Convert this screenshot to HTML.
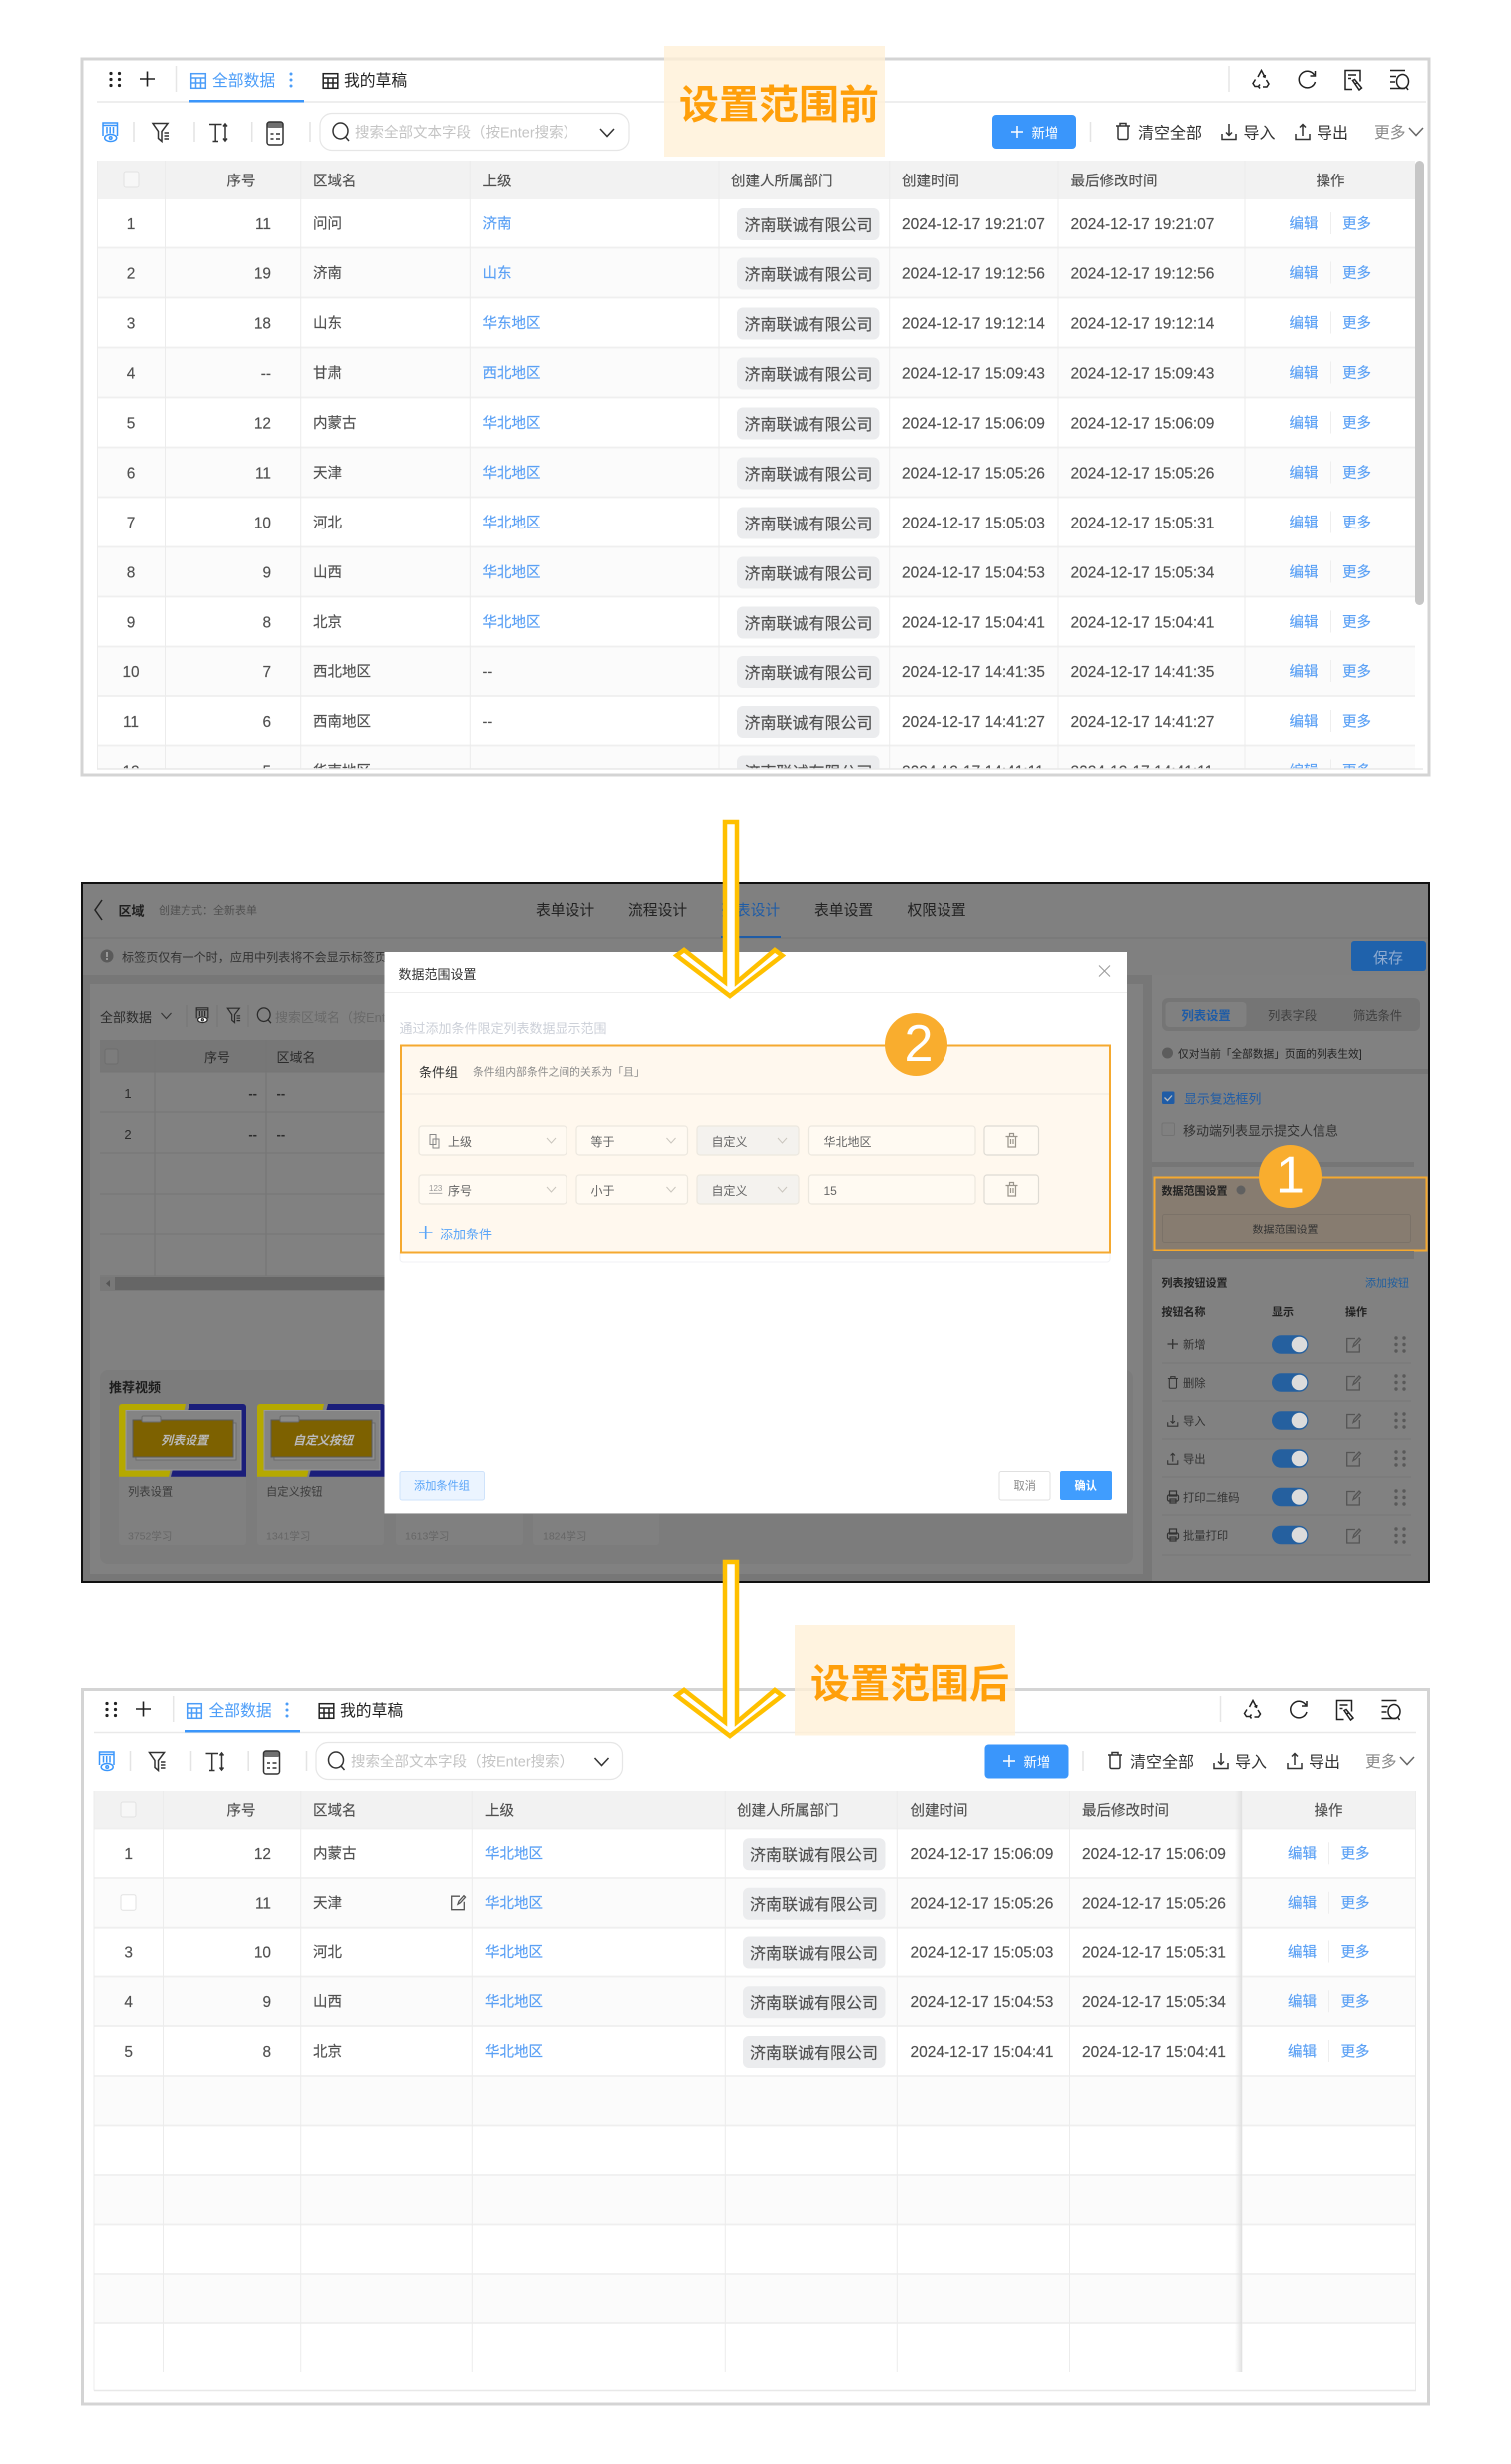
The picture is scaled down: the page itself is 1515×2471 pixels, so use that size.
<!DOCTYPE html>
<html lang="zh"><head><meta charset="utf-8"><title>设置范围</title>
<style>
html,body{margin:0;padding:0;background:#fff}
svg{display:block}
text{font-family:"Liberation Sans","Noto Sans CJK SC",sans-serif;dominant-baseline:central;white-space:pre;transform:translateY(1.4px)}
.b{font-size:14.5px;fill:#505050;stroke:#505050;stroke-width:.15px}.m{text-anchor:middle}.e{text-anchor:end}
.b.m,.b.e{font-size:15.4px}
.l{font-size:14.5px;fill:#5aa0f5;stroke:#5aa0f5;stroke-width:.15px}.c{font-size:16px;fill:#505050;stroke:#505050;stroke-width:.15px}.d{font-size:15.5px;fill:#505050;stroke:#505050;stroke-width:.15px}
.h{font-size:14.5px;fill:#505050;stroke:#505050;stroke-width:.15px}
.k{font-size:16px;fill:#333}
.w{font-size:13px;fill:#2b2b2b}
.n{font-size:11.5px;fill:#333}
.ic{fill:none;stroke:currentColor;stroke-width:1.5}
</style></head><body>
<svg xmlns="http://www.w3.org/2000/svg" width="1515" height="2471" viewBox="0 0 1515 2471">
<defs>
<g id="ig" class="ic" stroke-width="1.4"><rect x=".7" y=".7" width="14.6" height="14.6"/><path d="M.7 5h14.6M.7 10h14.6M5.5 5v10.3M10.5 5v10.3"/></g>
<g id="idots" fill="currentColor" stroke="none"><circle cx="1.5" cy="1.5" r="1.6"/><circle cx="10" cy="1.5" r="1.6"/><circle cx="1.5" cy="7.5" r="1.6"/><circle cx="10" cy="7.5" r="1.6"/><circle cx="1.5" cy="13.5" r="1.6"/><circle cx="10" cy="13.5" r="1.6"/></g>
<g id="ieye" class="ic" stroke-width="1.4"><path d="M1.500 14V1h14.500v13M5.500 5v6.500M8.700 5v6.500M12 5v6.500M1.500 3.500h14.500"/><ellipse cx="9.200" cy="16" rx="6" ry="3.500" fill="#fff"/><circle cx="9.200" cy="16" r="1.300"/></g>
<g id="ifil" class="ic" stroke-width="1.500"><path d="M1 1.500h15l-6 8v10l-3.500-3V9.500zM12.500 11h4.500M12.500 14h4.500M12.500 17h4.500"/></g>
<g id="itt" class="ic" stroke-width="1.700"><path d="M1 2.500h12.500M7.200 2.500V19M4.500 19.500h5.500M17 2v17M15 4.500l2-2.500 2 2.500M15 16.500l2 2.500 2-2.500"/></g>
<g id="ical"><rect x="1" y="1" width="16" height="23" rx="2.500" fill="none" stroke="currentColor" stroke-width="1.500"/><rect x="1" y="1" width="16" height="6" rx="2" fill="currentColor" fill-opacity=".7"/><path d="M4.500 13h3M10 13h4M4.500 18h3M10 18h4" stroke="currentColor" stroke-width="1.500"/></g>
<g id="isr" class="ic" stroke-width="1.700"><ellipse cx="8.500" cy="9" rx="7.500" ry="8"/><path d="M13.500 15l3.500 4"/></g>
<path id="ich" class="ic" d="M0 0l7 7.500 7-7.500"/>
<g id="itr" class="ic" stroke-width="1.800"><path d="M.5 3.500h14M4.500 3.500V1h6v2.500M2.500 3.500v12a1.500 1.500 0 0 0 1.500 1.500h7a1.500 1.500 0 0 0 1.500-1.500v-12"/></g>
<g id="iin" class="ic" stroke-width="1.700"><path d="M8 0v11M5 8.500l3 3 3-3M1 10v5.500h14V10"/></g>
<g id="iou" class="ic" stroke-width="1.700"><path d="M8 12V1M5 3.500l3-3 3 3M1 10v5.500h14V10"/></g>
<g id="irc" class="ic" stroke-width="1.800"><path d="M6 8l3.500-6.500L13 8M11 7.300l2 .9.400-2.200M3.500 10.500l-2.500 4 2 3h4M8 15.500l-1.500 2 1.500 2M14.500 11l2.500 4-2 3h-4"/></g>
<g id="irf" class="ic" stroke-width="1.800"><path d="M16.500 5A8.300 8.300 0 1 0 17.500 12M17.500 1v5h-5"/></g>
<g id="idc" class="ic" stroke-width="1.800"><path d="M8 20H1V1h15v11M4 5.500h8M4 9h3"/><path d="M8.500 11l2-1 7 8.500-2.500 2z"/><path d="M11 14.500l2.500-1.500"/></g>
<g id="isl" class="ic" stroke-width="1.600"><path d="M1 1h15M1 7h6M1 12.500h5M1 19h15"/><ellipse cx="13.500" cy="12" rx="6" ry="7"/><path d="M17 17.500l2 3"/></g>
<g id="isep"><rect x="0" y="-11" width="1" height="22" fill="#eee"/></g>
<rect id="chip" x="0" y="-15" width="142.500" height="32" rx="6" fill="#ebecee"/>
<path id="sc" fill="none" stroke="#c9c5bd" stroke-width="1" d="M0 0l4.500 5 4.500-5"/>
<g id="it2" fill="none" stroke="#9a958c" stroke-width="1.200"><path d="M.5 3.500h12M3 3.500V14h7.500V3.500M4.500 3.500V.5h4v3M5.500 6v5M8 6v5"/></g>
<g id="ied" fill="none" stroke="#555" stroke-width="1.300"><path d="M9 1.500H.7v13.500h12.600V7M7 9.500l1-3 5-5.500 1.500 1.500-5 5.500z"/></g>
<g id="idg" fill="#595959"><circle cx="2" cy="2" r="1.700"/><circle cx="10" cy="2" r="1.700"/><circle cx="2" cy="8.500" r="1.700"/><circle cx="10" cy="8.500" r="1.700"/><circle cx="2" cy="15" r="1.700"/><circle cx="10" cy="15" r="1.700"/></g>
<g id="itg"><rect x="0" y="-9.300" width="36.500" height="18.600" rx="9.300" fill="#25609f"/><circle cx="27.500" cy="0" r="7.800" fill="#dcdcdc"/></g>
<g id="thumb"><path d="M0 3a3 3 0 0 1 3-3h64L50 72.700H0z" fill="#b5a900"/><path d="M71 0h54a3 3 0 0 1 3 3v69.700H52z" fill="#1b1e7a"/><rect x="7" y="6.500" width="116" height="59.500" fill="#848484" stroke="#9a9a9a"/><rect x="17" y="19" width="101" height="37" fill="#8e8e8e" stroke="#6d6d6d"/><rect x="14" y="16" width="101" height="37" fill="#7d6100" stroke="#5a5a5a"/><rect x="23" y="12" width="19" height="6" rx="1.500" fill="#8c8c8c" stroke="#6a6a6a"/></g>
<clipPath id="cl1"><rect x="97" y="160" width="1333" height="611"/></clipPath>
<clipPath id="cl2"><rect x="81" y="885" width="1353" height="702"/></clipPath>
<linearGradient id="sh" x1="0" x2="1"><stop offset="0" stop-color="#e6e6e6" stop-opacity="0"/><stop offset="1" stop-color="#e0e0e0"/></linearGradient>
</defs>

<rect width="1515" height="2471" fill="#fff"/>

<!-- FRAME 1 -->
<rect x="82" y="59" width="1351" height="718" fill="#fff" stroke="#d4d4d4" stroke-width="3"/>
<path d="M97 102h1333" stroke="#e9e9e9" stroke-width="1.500"/>
<g id="f1top" style="color:#222">
<use href="#idots" x="109.500" y="72"/>
<path d="M140 79h15M147.500 71.500v15" stroke="#222" stroke-width="1.600"/>
<path d="M176.500 66v26" stroke="#e6e6e6" stroke-width="1.500"/>
<use href="#ig" x="191" y="73" style="color:#4c9df8"/>
<text x="213" y="80" font-size="15.800" fill="#4c9df8">全部数据</text>
<g fill="#4c9df8"><circle cx="292" cy="74" r="1.500"/><circle cx="292" cy="80" r="1.500"/><circle cx="292" cy="86" r="1.500"/></g>
<rect x="189" y="100" width="116" height="2.500" fill="#3a96fb"/>
<use href="#ig" x="323.500" y="73"/>
<text x="345" y="80" font-size="15.800" fill="#222">我的草稿</text>
<path d="M1232 66v26" stroke="#e6e6e6" stroke-width="1.500"/>
<use href="#irc" x="1255" y="69"/><use href="#irf" x="1301" y="70"/><use href="#idc" x="1348" y="69.500"/><use href="#isl" x="1393" y="69.500"/>
</g>
<g style="color:#333">
<use href="#ieye" x="101.500" y="122" style="color:#3a96fb"/>
<path d="M134 122v20M195 122v20M252.700 122v20M311 122v20" stroke="#e4e4e4" stroke-width="1.500"/>
<use href="#ifil" x="152" y="122"/><use href="#itt" x="209" y="122"/><use href="#ical" x="267" y="121"/>
<rect x="321" y="113.500" width="310" height="37" rx="12" fill="#fff" stroke="#e6e6e6" stroke-width="1.200"/>
<use href="#isr" x="333" y="122"/>
<text x="356" y="132" font-size="14.500" fill="#c4c4c4">搜索全部文本字段（按Enter搜索）</text>
<use href="#ich" x="602" y="129"/>
</g>
<g style="color:#333">
<rect x="995" y="115" width="84" height="34" rx="4" fill="#3a96fb"/>
<path d="M1014 132h12M1020 126v12" stroke="#fff" stroke-width="1.500"/>
<text x="1034.500" y="132" font-size="13.400" fill="#fff">新增</text>
<path d="M1093.500 122v20" stroke="#e4e4e4" stroke-width="1.500"/>
<use href="#itr" x="1118.500" y="122.500"/><text x="1141" y="132.500" class="k">清空全部</text>
<use href="#iin" x="1224" y="124"/><text x="1246.500" y="132.500" class="k">导入</text>
<use href="#iou" x="1298" y="124"/><text x="1320" y="132.500" class="k">导出</text>
<text x="1378" y="132" font-size="15.800" fill="#8a8a8a">更多</text>
<use href="#ich" x="1413" y="128" style="color:#666"/>
</g>
<rect x="97" y="161" width="1322" height="39" fill="#f2f2f2"/>
<g clip-path="url(#cl1)">
<g fill="#fbfbfb"><rect x="97" y="249" width="1322" height="49"/><rect x="97" y="349" width="1322" height="49"/><rect x="97" y="449" width="1322" height="49"/><rect x="97" y="549" width="1322" height="49"/><rect x="97" y="649" width="1322" height="49"/><rect x="97" y="748" width="1322" height="30"/></g>
<path d="M97 248.500h1322M97 298.500h1322M97 348.500h1322M97 398.500h1322M97 448.500h1322M97 498.500h1322M97 548.500h1322M97 598.500h1322M97 648.500h1322M97 698h1322M97 747.500h1322" stroke="#efefef" stroke-width="1.800" fill="none"/>
<path d="M97.500 161v610M165.500 161v610M301.700 161v610M471.300 161v610M721 161v610M891.700 161v610M1061 161v610M1248 161v610" stroke="#ececec" stroke-width="1" fill="none"/>
</g>
<rect x="124" y="172" width="15" height="16" rx="2" fill="#f7f7f7" stroke="#e2e2e2"/>
<text x="242" y="181" class="h m">序号</text><text x="314" y="181" class="h">区域名</text><text x="483.500" y="181" class="h">上级</text><text x="733" y="181" class="h">创建人所属部门</text><text x="904" y="181" class="h">创建时间</text><text x="1073.500" y="181" class="h">最后修改时间</text><text x="1334" y="181" class="h m">操作</text>
<g clip-path="url(#cl1)">
<g transform="translate(0,224)"><text x="131" class="b m">1</text><text x="272" class="b e">11</text><text x="314" class="b">问问</text><text x="483.500" class="l">济南</text><use href="#chip" x="739" y="0"/><text x="746.500" y="1.500" class="c">济南联诚有限公司</text><text x="904" class="d">2024-12-17 19:21:07</text><text x="1073.500" class="d">2024-12-17 19:21:07</text><text x="1292.500" class="l">编辑</text><use href="#isep" x="1334"/><text x="1346" class="l">更多</text></g>
<g transform="translate(0,273.500)"><text x="131" class="b m">2</text><text x="272" class="b e">19</text><text x="314" class="b">济南</text><text x="483.500" class="l">山东</text><use href="#chip" x="739" y="0"/><text x="746.500" y="1.500" class="c">济南联诚有限公司</text><text x="904" class="d">2024-12-17 19:12:56</text><text x="1073.500" class="d">2024-12-17 19:12:56</text><text x="1292.500" class="l">编辑</text><use href="#isep" x="1334"/><text x="1346" class="l">更多</text></g>
<g transform="translate(0,323.500)"><text x="131" class="b m">3</text><text x="272" class="b e">18</text><text x="314" class="b">山东</text><text x="483.500" class="l">华东地区</text><use href="#chip" x="739" y="0"/><text x="746.500" y="1.500" class="c">济南联诚有限公司</text><text x="904" class="d">2024-12-17 19:12:14</text><text x="1073.500" class="d">2024-12-17 19:12:14</text><text x="1292.500" class="l">编辑</text><use href="#isep" x="1334"/><text x="1346" class="l">更多</text></g>
<g transform="translate(0,373.500)"><text x="131" class="b m">4</text><text x="272" class="b e">--</text><text x="314" class="b">甘肃</text><text x="483.500" class="l">西北地区</text><use href="#chip" x="739" y="0"/><text x="746.500" y="1.500" class="c">济南联诚有限公司</text><text x="904" class="d">2024-12-17 15:09:43</text><text x="1073.500" class="d">2024-12-17 15:09:43</text><text x="1292.500" class="l">编辑</text><use href="#isep" x="1334"/><text x="1346" class="l">更多</text></g>
<g transform="translate(0,423.500)"><text x="131" class="b m">5</text><text x="272" class="b e">12</text><text x="314" class="b">内蒙古</text><text x="483.500" class="l">华北地区</text><use href="#chip" x="739" y="0"/><text x="746.500" y="1.500" class="c">济南联诚有限公司</text><text x="904" class="d">2024-12-17 15:06:09</text><text x="1073.500" class="d">2024-12-17 15:06:09</text><text x="1292.500" class="l">编辑</text><use href="#isep" x="1334"/><text x="1346" class="l">更多</text></g>
<g transform="translate(0,473.500)"><text x="131" class="b m">6</text><text x="272" class="b e">11</text><text x="314" class="b">天津</text><text x="483.500" class="l">华北地区</text><use href="#chip" x="739" y="0"/><text x="746.500" y="1.500" class="c">济南联诚有限公司</text><text x="904" class="d">2024-12-17 15:05:26</text><text x="1073.500" class="d">2024-12-17 15:05:26</text><text x="1292.500" class="l">编辑</text><use href="#isep" x="1334"/><text x="1346" class="l">更多</text></g>
<g transform="translate(0,523.500)"><text x="131" class="b m">7</text><text x="272" class="b e">10</text><text x="314" class="b">河北</text><text x="483.500" class="l">华北地区</text><use href="#chip" x="739" y="0"/><text x="746.500" y="1.500" class="c">济南联诚有限公司</text><text x="904" class="d">2024-12-17 15:05:03</text><text x="1073.500" class="d">2024-12-17 15:05:31</text><text x="1292.500" class="l">编辑</text><use href="#isep" x="1334"/><text x="1346" class="l">更多</text></g>
<g transform="translate(0,573.500)"><text x="131" class="b m">8</text><text x="272" class="b e">9</text><text x="314" class="b">山西</text><text x="483.500" class="l">华北地区</text><use href="#chip" x="739" y="0"/><text x="746.500" y="1.500" class="c">济南联诚有限公司</text><text x="904" class="d">2024-12-17 15:04:53</text><text x="1073.500" class="d">2024-12-17 15:05:34</text><text x="1292.500" class="l">编辑</text><use href="#isep" x="1334"/><text x="1346" class="l">更多</text></g>
<g transform="translate(0,623.500)"><text x="131" class="b m">9</text><text x="272" class="b e">8</text><text x="314" class="b">北京</text><text x="483.500" class="l">华北地区</text><use href="#chip" x="739" y="0"/><text x="746.500" y="1.500" class="c">济南联诚有限公司</text><text x="904" class="d">2024-12-17 15:04:41</text><text x="1073.500" class="d">2024-12-17 15:04:41</text><text x="1292.500" class="l">编辑</text><use href="#isep" x="1334"/><text x="1346" class="l">更多</text></g>
<g transform="translate(0,673)"><text x="131" class="b m">10</text><text x="272" class="b e">7</text><text x="314" class="b">西北地区</text><text x="483.500" class="b">--</text><use href="#chip" x="739" y="0"/><text x="746.500" y="1.500" class="c">济南联诚有限公司</text><text x="904" class="d">2024-12-17 14:41:35</text><text x="1073.500" class="d">2024-12-17 14:41:35</text><text x="1292.500" class="l">编辑</text><use href="#isep" x="1334"/><text x="1346" class="l">更多</text></g>
<g transform="translate(0,723)"><text x="131" class="b m">11</text><text x="272" class="b e">6</text><text x="314" class="b">西南地区</text><text x="483.500" class="b">--</text><use href="#chip" x="739" y="0"/><text x="746.500" y="1.500" class="c">济南联诚有限公司</text><text x="904" class="d">2024-12-17 14:41:27</text><text x="1073.500" class="d">2024-12-17 14:41:27</text><text x="1292.500" class="l">编辑</text><use href="#isep" x="1334"/><text x="1346" class="l">更多</text></g>
<g transform="translate(0,772.500)"><text x="131" class="b m">12</text><text x="272" class="b e">5</text><text x="314" class="b">华南地区</text><text x="483.500" class="b">--</text><use href="#chip" x="739" y="0"/><text x="746.500" y="1.500" class="c">济南联诚有限公司</text><text x="904" class="d">2024-12-17 14:41:11</text><text x="1073.500" class="d">2024-12-17 14:41:11</text><text x="1292.500" class="l">编辑</text><use href="#isep" x="1334"/><text x="1346" class="l">更多</text></g>
</g>
<path d="M97 771h1330" stroke="#e8e8e8" stroke-width="1.500"/>
<rect x="1419" y="161" width="9" height="446" rx="4.500" fill="#c6c6c6"/>
<rect x="666" y="46" width="221" height="111" fill="#ffefd6" fill-opacity=".78"/>
<text x="681" y="104" font-size="40px" font-weight="700" fill="#ff9f0a">设置范围前</text>

<!-- FRAME 2 -->
<g clip-path="url(#cl2)">
<rect x="81" y="885" width="1353" height="702" fill="#777"/>
<rect x="82" y="886" width="1351" height="92" fill="#808080"/>
<path d="M82 941h1351" stroke="#747474"/>
<rect x="90" y="987" width="1056" height="591" fill="#818181"/>
<rect x="1155" y="978" width="279" height="608" fill="#818181"/>
<path d="M102 903l-7 10 7 10" fill="none" stroke="#222" stroke-width="1.500"/>
<text x="118.500" y="912.500" font-size="13px" font-weight="700" fill="#1f1f1f">区域</text>
<text x="159" y="912.500" font-size="11px" fill="#505050">创建方式：全新表单</text>
<text x="537" y="912.500" font-size="14.800" fill="#222">表单设计</text><text x="630" y="912.500" font-size="14.800" fill="#222">流程设计</text><text x="723" y="912.500" font-size="14.800" fill="#1f5ca6">列表设计</text><text x="816" y="912.500" font-size="14.800" fill="#222">表单设置</text><text x="909.500" y="912.500" font-size="14.800" fill="#222">权限设置</text>
<rect x="723" y="939" width="60" height="2" fill="#1f5ca6"/>
<circle cx="107" cy="959" r="6.500" fill="#5a5a5a"/><rect x="106" y="955" width="2" height="5" fill="#999"/><rect x="106" y="961" width="2" height="2" fill="#999"/>
<text x="122" y="959" font-size="12.100" fill="#333">标签页仅有一个时，应用中列表将不会显示标签页</text>
<rect x="1355" y="944" width="75" height="30" rx="3" fill="#1f62ac"/>
<text x="1377" y="960" font-size="15px" fill="#8fabd0">保存</text>

<text x="100" y="1019" class="w">全部数据</text>
<path d="M161.500 1016l5 5.500 5-5.500" fill="none" stroke="#333" stroke-width="1.100"/>
<path d="M187 1008v22M218 1008v22M249 1008v22" stroke="#757575"/>
<g style="color:#2b2b2b">
<g transform="translate(196,1010) scale(.8)"><use href="#ieye" style="color:#2b2b2b"/></g>
<g transform="translate(227.500,1010) scale(.8)"><use href="#ifil"/></g>
<g transform="translate(257.500,1010) scale(.85)"><use href="#isr"/></g>
</g>
<text x="276" y="1019" font-size="13px" fill="#6a6a6a">搜索区域名（按Enter</text>
<rect x="100" y="1043" width="400" height="32" fill="#777"/>
<path d="M100 1075h400M100 1115h400M100 1156h400M100 1197h400M100 1238h400M100 1280h400" stroke="#757575"/>
<path d="M155 1043v237M267 1043v237" stroke="#747474"/>
<rect x="105" y="1052" width="13" height="15" rx="2" fill="#7c7c7c" stroke="#6e6e6e"/>
<text x="218" y="1059" class="w m">序号</text><text x="277.500" y="1059" class="w">区域名</text>
<text x="128" y="1095" class="w m">1</text><text x="258" y="1095" class="w e" font-weight="700">--</text><text x="277.500" y="1095" class="w" font-weight="700">--</text>
<text x="128" y="1136" class="w m">2</text><text x="258" y="1136" class="w e" font-weight="700">--</text><text x="277.500" y="1136" class="w" font-weight="700">--</text>
<rect x="100" y="1281" width="400" height="14" fill="#787878"/><rect x="115" y="1281" width="385" height="13" fill="#666"/>
<path d="M110 1284l-4 3.500 4 3.500z" fill="#555"/>
<rect x="100" y="1374" width="1036" height="194" rx="8" fill="#7c7c7c"/>
<text x="109" y="1390" font-size="13px" font-weight="700" fill="#1d1d1d">推荐视频</text>
<g fill="#808080"><rect x="119" y="1408" width="128" height="141" rx="3"/><rect x="258" y="1408" width="127" height="141" rx="3"/><rect x="397" y="1408" width="127" height="141" rx="3"/><rect x="534" y="1408" width="127" height="141" rx="3"/></g>
<use href="#thumb" x="119" y="1408"/><use href="#thumb" x="258" y="1408"/>
<text x="185" y="1443" font-size="12px" font-weight="700" font-style="italic" fill="#b9b9b9" class="m">列表设置</text>
<text x="324" y="1443" font-size="12px" font-weight="700" font-style="italic" fill="#b9b9b9" class="m">自定义按钮</text>
<text x="128" y="1495" font-size="11.300" fill="#3c3c3c">列表设置</text><text x="267" y="1495" font-size="11.300" fill="#3c3c3c">自定义按钮</text>
<text x="128" y="1539" font-size="10.500" fill="#666">3752学习</text><text x="267" y="1539" font-size="10.500" fill="#666">1341学习</text><text x="406" y="1539" font-size="10.500" fill="#666">1613学习</text><text x="544" y="1539" font-size="10.500" fill="#666">1824学习</text>

<!-- right panel -->
<rect x="1165" y="1001" width="259" height="33" rx="6" fill="#757575"/>
<rect x="1168.500" y="1005" width="81" height="25" rx="4" fill="#808080"/>
<text x="1184.500" y="1017.500" font-size="12.300" font-weight="700" fill="#1f5ca6">列表设置</text>
<text x="1271" y="1017.500" font-size="12.300" fill="#3f3f3f">列表字段</text><text x="1357" y="1017.500" font-size="12.300" fill="#3f3f3f">筛选条件</text>
<circle cx="1170.500" cy="1056" r="5.500" fill="#5c5c5c"/>
<text x="1181" y="1056" font-size="10.700" fill="#222">仅对当前「全部数据」页面的列表生效]</text>
<rect x="1155" y="1072" width="279" height="5" fill="#767676"/>
<rect x="1165" y="1094.500" width="12.500" height="12.500" rx="1.500" fill="#1f5ca6"/><path d="M1167.500 1100.500l3 3 4.500-5" fill="none" stroke="#bbb" stroke-width="1.300"/>
<text x="1187" y="1100.500" font-size="12.900" fill="#1f5ca6">显示复选框列</text>
<rect x="1165" y="1126" width="12.500" height="12.500" rx="1.500" fill="#808080" stroke="#737373"/>
<text x="1186" y="1132.500" font-size="13px" fill="#333">移动端列表显示提交人信息</text>
<rect x="1155" y="1165" width="263" height="5" fill="#767676"/>
<rect x="1157.500" y="1180.500" width="273" height="74" fill="#877c70" stroke="#f5a92f" stroke-width="2"/>
<text x="1164.500" y="1193" font-size="11px" font-weight="700" fill="#222">数据范围设置</text><circle cx="1244" cy="1193" r="4.500" fill="#606060"/>
<rect x="1165.500" y="1217.500" width="249" height="29" rx="2" fill="#877c70" stroke="#7b7268"/>
<text x="1255.500" y="1232" font-size="11px" fill="#333">数据范围设置</text>
<rect x="1155" y="1255" width="263" height="8" fill="#767676"/>
<text x="1164.500" y="1286" font-size="11px" font-weight="700" fill="#222">列表按钮设置</text><text x="1369" y="1286" font-size="11px" fill="#215f9e">添加按钮</text>
<text x="1164.500" y="1315" font-size="11px" font-weight="700" fill="#222">按钮名称</text><text x="1275" y="1315" font-size="11px" font-weight="700" fill="#222">显示</text><text x="1349" y="1315" font-size="11px" font-weight="700" fill="#222">操作</text>
<path d="M1165 1367h250M1165 1405h250M1165 1443h250M1165 1481h250M1165 1519h250M1165 1559h250" stroke="#787878"/>
<g style="color:#333" stroke="#333">
<path d="M1170.500 1348h10.500M1175.700 1343v10" stroke="#333" stroke-width="1.300"/>
<g transform="translate(1170.500,1380) scale(.72)"><use href="#itr"/></g>
<g transform="translate(1170,1419) scale(.72)"><use href="#iin"/></g>
<g transform="translate(1170,1457) scale(.72)"><use href="#iou"/></g>
<g fill="none" stroke="#333" stroke-width="1.200"><rect x="1172.500" y="1495" width="7" height="5"/><rect x="1170.500" y="1499" width="11" height="6" rx="1.500"/><rect x="1173" y="1503" width="6" height="4"/><rect x="1172.500" y="1533" width="7" height="5"/><rect x="1170.500" y="1537" width="11" height="6" rx="1.500"/><rect x="1173" y="1541" width="6" height="4"/></g>
</g>
<g font-size="11.300" fill="#333"><text x="1186" y="1348">新增</text><text x="1186" y="1386.500">删除</text><text x="1186" y="1424.500">导入</text><text x="1186" y="1462.500">导出</text><text x="1186" y="1501">打印二维码</text><text x="1186" y="1539">批量打印</text></g>
<use href="#itg" x="1275" y="1348.500"/><use href="#itg" x="1275" y="1386.500"/><use href="#itg" x="1275" y="1424.500"/><use href="#itg" x="1275" y="1462.500"/><use href="#itg" x="1275" y="1501"/><use href="#itg" x="1275" y="1539"/>
<use href="#ied" x="1350" y="1341"/><use href="#ied" x="1350" y="1379"/><use href="#ied" x="1350" y="1417"/><use href="#ied" x="1350" y="1455"/><use href="#ied" x="1350" y="1494"/><use href="#ied" x="1350" y="1532"/>
<use href="#idg" x="1398" y="1340"/><use href="#idg" x="1398" y="1378"/><use href="#idg" x="1398" y="1416"/><use href="#idg" x="1398" y="1454"/><use href="#idg" x="1398" y="1493"/><use href="#idg" x="1398" y="1531"/>
</g>
<rect x="82" y="886" width="1351" height="700" fill="none" stroke="#111" stroke-width="2"/>

<!-- modal -->
<rect x="385.500" y="955" width="744.500" height="562" fill="#fff"/>
<text x="399.500" y="976" font-size="13px" fill="#333">数据范围设置</text>
<path d="M385.500 995.500H1130" stroke="#eee" stroke-width="1"/>
<path d="M1102 968.500l11 11M1113 968.500l-11 11" stroke="#999" stroke-width="1"/>
<text x="400.500" y="1030" font-size="13px" fill="#ccd0d8">通过添加条件限定列表数据显示范围</text>
<path d="M401 1256v7a3 3 0 0 0 3 3h706a3 3 0 0 0 3-3v-7" fill="none" stroke="#f0f1f4"/>
<rect x="402" y="1048.500" width="711" height="208" fill="#fff8ee" stroke="#f5a92f" stroke-width="2"/>
<text x="420" y="1074" font-size="13px" fill="#333">条件组</text>
<text x="474" y="1074" font-size="10.800" fill="#8c8c8c">条件组内部条件之间的关系为「且」</text>
<path d="M403 1097h709" stroke="#eee9e0"/>
<g fill="#fffaf2" stroke="#ece8df" stroke-width="1.200">
<rect x="420" y="1129" width="148" height="29" rx="3"/><rect x="578" y="1129" width="111.500" height="29" rx="3"/><rect x="699" y="1129" width="102" height="29" rx="3" fill="#f4f2ee"/><rect x="810.500" y="1129" width="167.500" height="29" rx="3"/><rect x="987" y="1129" width="54.500" height="29" rx="3" stroke="#dedbd4"/>
<rect x="420" y="1178" width="148" height="29" rx="3"/><rect x="578" y="1178" width="111.500" height="29" rx="3"/><rect x="699" y="1178" width="102" height="29" rx="3" fill="#f4f2ee"/><rect x="810.500" y="1178" width="167.500" height="29" rx="3"/><rect x="987" y="1178" width="54.500" height="29" rx="3" stroke="#dedbd4"/>
</g>
<path d="M431 1137.500h6v10h-6zM434 1142h6v9h-6z" fill="none" stroke="#888" stroke-width="1"/>
<text x="430" y="1190" font-size="8px" fill="#999" text-decoration="underline">123</text>
<g font-size="12px" fill="#666"><text x="449" y="1143.500">上级</text><text x="592.500" y="1143.500">等于</text><text x="713.500" y="1143.500">自定义</text><text x="825.500" y="1143.500">华北地区</text><text x="449" y="1192.500">序号</text><text x="592.500" y="1192.500">小于</text><text x="713.500" y="1192.500">自定义</text><text x="825.500" y="1192.500">15</text></g>
<use href="#sc" x="548" y="1141"/><use href="#sc" x="668.500" y="1141"/><use href="#sc" x="780" y="1141"/><use href="#sc" x="548" y="1190"/><use href="#sc" x="668.500" y="1190"/><use href="#sc" x="780" y="1190"/>
<use href="#it2" x="1008" y="1136"/><use href="#it2" x="1008" y="1185"/>
<path d="M420 1236h13.500M426.700 1229v14" stroke="#5aa5f8" stroke-width="1.600"/>
<text x="441" y="1236.500" font-size="13px" fill="#5aa5f8">添加条件</text>
<rect x="401" y="1475.500" width="84.500" height="28.500" rx="2" fill="#ebf4ff" stroke="#cfe3fb"/>
<text x="415" y="1489" font-size="11.200" fill="#5aa5f8">添加条件组</text>
<rect x="1002" y="1475.500" width="51" height="28.500" rx="2" fill="#fff" stroke="#e0e0e0"/>
<text x="1016.500" y="1489" font-size="11.200" fill="#888">取消</text>
<rect x="1063" y="1475" width="52" height="29" rx="2" fill="#409dfe"/>
<text x="1077.500" y="1489" font-size="11.200" font-weight="700" fill="#fff">确认</text>
<path d="M385.500 1517.500H1130" stroke="#b8b8b8" stroke-width="1"/>
<ellipse cx="918.500" cy="1047.500" rx="31.500" ry="31.500" fill="#f9ad2e"/>
<text x="921" y="1047" font-size="52px" fill="#fff" class="m" style="transform:none">2</text>
<ellipse cx="1293.500" cy="1179.500" rx="31.500" ry="31.500" fill="#f9ad2e"/>
<text x="1293.500" y="1178.500" font-size="52px" fill="#fff" class="m" style="transform:none">1</text>

<!-- arrow 1 -->
<path d="M727 824h12v161L777 953l7.500 5.500L732 999l-53.500-40.500L686 953l41 32z" fill="#fff" stroke="#ffc000" stroke-width="4.500" stroke-miterlimit="6"/>

<!-- FRAME 3 -->
<rect x="82.500" y="1694.500" width="1350" height="716.500" fill="#fff" stroke="#d4d4d4" stroke-width="3"/>
<path d="M94 1737.500h1326" stroke="#e9e9e9" stroke-width="1.500"/>
<g transform="translate(-4,1635)" style="color:#222">
<use href="#idots" x="109.500" y="72"/>
<path d="M140 79h15M147.500 71.500v15" stroke="#222" stroke-width="1.600"/>
<path d="M177.700 66v26" stroke="#e6e6e6" stroke-width="1.500"/>
<use href="#ig" x="191" y="73" style="color:#4c9df8"/>
<text x="213.500" y="80" font-size="15.800" fill="#4c9df8">全部数据</text>
<g fill="#4c9df8"><circle cx="292" cy="74" r="1.500"/><circle cx="292" cy="80" r="1.500"/><circle cx="292" cy="86" r="1.500"/></g>
<rect x="189" y="100" width="116" height="2.500" fill="#3a96fb"/>
<use href="#ig" x="323.500" y="73"/>
<text x="345" y="80" font-size="15.800" fill="#222">我的草稿</text>
</g>
<g transform="translate(-8.500,1635)" style="color:#222">
<path d="M1232 66v26" stroke="#e6e6e6" stroke-width="1.500"/>
<use href="#irc" x="1255" y="69"/><use href="#irf" x="1301" y="70"/><use href="#idc" x="1348" y="69.500"/><use href="#isl" x="1393" y="69.500"/>
</g>
<g transform="translate(-3.500,1634)" style="color:#333">
<use href="#ieye" x="101.500" y="122" style="color:#3a96fb"/>
<path d="M134 122v20M195 122v20M252.700 122v20M311 122v20" stroke="#e4e4e4" stroke-width="1.500"/>
<use href="#ifil" x="152" y="122"/><use href="#itt" x="209" y="122"/><use href="#ical" x="267" y="121"/>
<rect x="320.500" y="113.500" width="307.500" height="37" rx="12" fill="#fff" stroke="#e6e6e6" stroke-width="1.200"/>
<use href="#isr" x="332" y="122"/>
<text x="355.500" y="132" font-size="14.500" fill="#c4c4c4">搜索全部文本字段（按Enter搜索）</text>
<use href="#ich" x="600" y="129"/>
</g>
<g transform="translate(-8,1634)" style="color:#333">
<rect x="995.500" y="115.500" width="84" height="34" rx="4" fill="#3a96fb"/>
<path d="M1014 132h12M1020 126v12" stroke="#fff" stroke-width="1.500"/>
<text x="1034.500" y="132" font-size="13.400" fill="#fff">新增</text>
<path d="M1094 122v20" stroke="#e4e4e4" stroke-width="1.500"/>
<use href="#itr" x="1118.500" y="122.500"/><text x="1141" y="132.500" class="k">清空全部</text>
<use href="#iin" x="1224" y="124"/><text x="1246" y="132.500" class="k">导入</text>
<use href="#iou" x="1298" y="124"/><text x="1320" y="132.500" class="k">导出</text>
<text x="1377" y="132" font-size="15.800" fill="#8a8a8a">更多</text>
<use href="#ich" x="1412" y="128" style="color:#666"/>
</g>
<rect x="94" y="1796" width="1326" height="37.500" fill="#f2f2f2"/>
<g fill="#fbfbfb"><rect x="94" y="1884" width="1326" height="48"/><rect x="94" y="1983" width="1326" height="49"/><rect x="94" y="2083" width="1326" height="48"/><rect x="94" y="2182" width="1326" height="48"/><rect x="94" y="2281" width="1326" height="49"/></g>
<path d="M94 1833.500h1326M94 1883h1326M94 1932.700h1326M94 1982.500h1326M94 2032h1326M94 2082h1326M94 2131.500h1326M94 2181h1326M94 2230.500h1326M94 2280h1326M94 2330h1326" stroke="#efefef" stroke-width="1.800" fill="none"/>
<path d="M94 1796V2397.500M163.500 1796V2379M301.700 1796V2379M473.300 1796V2379M727.300 1796V2379M899.300 1796V2379M1072.500 1796V2379M1245 1796V2379M1419.500 1796V2397.500" stroke="#ececec" stroke-width="1" fill="none"/>
<rect x="1238" y="1796" width="7" height="583" fill="url(#sh)"/>
<path d="M94 2397.500h1326" stroke="#e8e8e8" stroke-width="1.500"/>
<rect x="121" y="1807" width="15" height="15" rx="2" fill="#f7f7f7" stroke="#e2e2e2"/>
<text x="242" y="1815" class="h m">序号</text><text x="314" y="1815" class="h">区域名</text><text x="486" y="1815" class="h">上级</text><text x="739" y="1815" class="h">创建人所属部门</text><text x="912.500" y="1815" class="h">创建时间</text><text x="1085" y="1815" class="h">最后修改时间</text><text x="1332" y="1815" class="h m">操作</text>
<g transform="translate(0,1858.300)"><text x="128.700" class="b m">1</text><text x="272" class="b e">12</text><text x="314" class="b">内蒙古</text><text x="486" class="l">华北地区</text><use href="#chip" x="745" y="0"/><text x="752" y="1.500" class="c">济南联诚有限公司</text><text x="912.500" class="d">2024-12-17 15:06:09</text><text x="1085" class="d">2024-12-17 15:06:09</text><text x="1291" class="l">编辑</text><use href="#isep" x="1332"/><text x="1344.500" class="l">更多</text></g>
<g transform="translate(0,1907.700)"><rect x="121" y="-8" width="15" height="15.500" rx="2" fill="#fff" stroke="#e2e2e2"/><text x="272" class="b e">11</text><text x="314" class="b">天津</text><use href="#ied" x="452" y="-8" /><text x="486" class="l">华北地区</text><use href="#chip" x="745" y="0"/><text x="752" y="1.500" class="c">济南联诚有限公司</text><text x="912.500" class="d">2024-12-17 15:05:26</text><text x="1085" class="d">2024-12-17 15:05:26</text><text x="1291" class="l">编辑</text><use href="#isep" x="1332"/><text x="1344.500" class="l">更多</text></g>
<g transform="translate(0,1957.500)"><text x="128.700" class="b m">3</text><text x="272" class="b e">10</text><text x="314" class="b">河北</text><text x="486" class="l">华北地区</text><use href="#chip" x="745" y="0"/><text x="752" y="1.500" class="c">济南联诚有限公司</text><text x="912.500" class="d">2024-12-17 15:05:03</text><text x="1085" class="d">2024-12-17 15:05:31</text><text x="1291" class="l">编辑</text><use href="#isep" x="1332"/><text x="1344.500" class="l">更多</text></g>
<g transform="translate(0,2007.300)"><text x="128.700" class="b m">4</text><text x="272" class="b e">9</text><text x="314" class="b">山西</text><text x="486" class="l">华北地区</text><use href="#chip" x="745" y="0"/><text x="752" y="1.500" class="c">济南联诚有限公司</text><text x="912.500" class="d">2024-12-17 15:04:53</text><text x="1085" class="d">2024-12-17 15:05:34</text><text x="1291" class="l">编辑</text><use href="#isep" x="1332"/><text x="1344.500" class="l">更多</text></g>
<g transform="translate(0,2057)"><text x="128.700" class="b m">5</text><text x="272" class="b e">8</text><text x="314" class="b">北京</text><text x="486" class="l">华北地区</text><use href="#chip" x="745" y="0"/><text x="752" y="1.500" class="c">济南联诚有限公司</text><text x="912.500" class="d">2024-12-17 15:04:41</text><text x="1085" class="d">2024-12-17 15:04:41</text><text x="1291" class="l">编辑</text><use href="#isep" x="1332"/><text x="1344.500" class="l">更多</text></g>

<!-- arrow 2 -->
<path d="M727 1566h12v161L777 1695l7.500 5.500L732 1741l-53.500-40.500L686 1695l41 32z" fill="#fff" stroke="#ffc000" stroke-width="4.500" stroke-miterlimit="6"/>

<rect x="797" y="1630" width="221" height="110.500" fill="#ffefd6" fill-opacity=".78"/>
<text x="812" y="1688" font-size="40px" font-weight="700" fill="#ff9f0a">设置范围后</text>
</svg>
</body></html>
